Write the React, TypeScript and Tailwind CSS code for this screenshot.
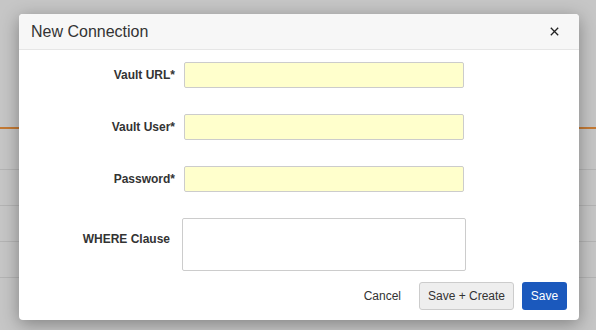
import React from "react";

const font = { fontFamily: '"Liberation Sans", Arial, Helvetica, sans-serif' };

function Field({ label }: { label: string }) {
  return (
    <div className="flex items-center gap-[9px] mb-[26px]">
      <label className="w-[156px] text-right text-[12px] font-bold text-[#333]">{label}</label>
      <input className="w-[280px] h-[26px] bg-[#ffffcc] border border-[#cccccc] rounded-[2px] outline-none" />
    </div>
  );
}

export default function App() {
  return (
    <div style={font} className="relative w-[596px] h-[330px] overflow-hidden bg-[#c6c6c6]">
      {/* page behind the dialog */}
      <div className="flex flex-col w-full">
        <div className="h-[127px]" />
        <div className="h-[2px] bg-[#c47a35]" />
        <div className="h-[41px] border-b border-[#b4b4b4]" />
        <div className="h-[36px] border-b border-[#b4b4b4]" />
        <div className="h-[36px] border-b border-[#b4b4b4]" />
        <div className="h-[36px] border-b border-[#b4b4b4]" />
      </div>

      {/* dialog */}
      <div className="absolute left-[19px] top-[14px] w-[560px] h-[306px] bg-white rounded-[4px] overflow-hidden shadow-[0_4px_18px_rgba(0,0,0,0.35)]">
        <div className="h-[36px] bg-[#f7f7f7] border-b border-[#e6e6e6] flex items-center justify-between pl-[12px] pr-[20px]">
          <h2 className="text-[16px] text-[#333] leading-none">New Connection</h2>
          <svg width="9" height="9" viewBox="0 0 9 9" className="text-[#222]">
            <path d="M0.8 0.8 L8.2 8.2 M8.2 0.8 L0.8 8.2" stroke="currentColor" strokeWidth="1.3" />
          </svg>
        </div>

        <div className="pt-[12px]">
          <Field label="Vault URL*" />
          <Field label="Vault User*" />
          <Field label="Password*" />
          <div className="flex items-start gap-[12px]">
            <label className="w-[151px] text-right text-[12px] font-bold text-[#333] leading-[14px] pt-[14px]">
              WHERE Clause
            </label>
            <textarea className="w-[284px] h-[53px] border border-[#cccccc] rounded-[2px] resize-none outline-none" />
          </div>
          <div className="flex justify-end items-center gap-[8px] mt-[11px] pr-[12px]">
            <button className="h-[28px] pl-[14px] pr-[10px] text-[12px] text-[#333]">Cancel</button>
            <button className="h-[28px] w-[95px] bg-[#eeeeee] border border-[#cccccc] rounded-[3px] text-[12px] text-[#333]">
              Save + Create
            </button>
            <button className="h-[28px] w-[45px] bg-[#1b59bd] rounded-[3px] text-[12px] text-white">Save</button>
          </div>
        </div>
      </div>
    </div>
  );
}
